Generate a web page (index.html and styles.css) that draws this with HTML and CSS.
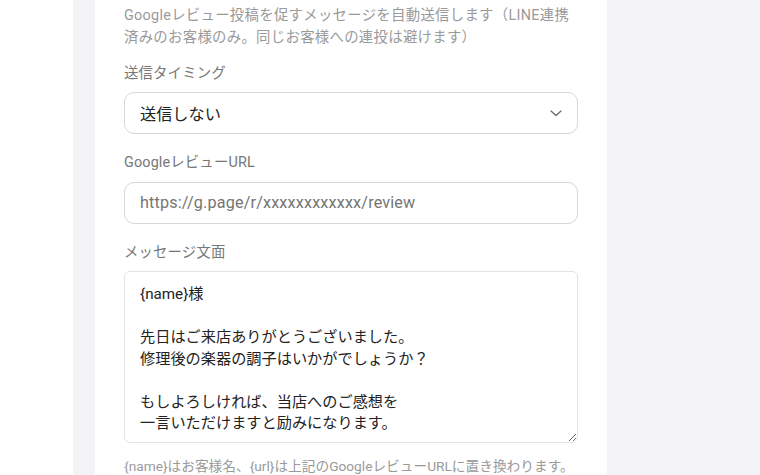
FILE: index.html
```html
<!DOCTYPE html>
<html lang="ja">
<head>
<meta charset="utf-8">
<title>Googleレビュー設定</title>
<link rel="stylesheet" href="styles.css">
</head>
<body>
<div class="sidebar"></div>
<main class="main">
  <section class="card">
    <p class="desc">Googleレビュー投稿を促すメッセージを自動送信します（LINE連携済みのお客様のみ。同じお客様への連投は避けます）</p>

    <div class="field">
      <label class="label" for="timing">送信タイミング</label>
      <div class="select" id="timing">
        <span class="select-value">送信しない</span>
        <svg class="chevron" width="12" height="7" viewBox="0 0 12 7"><path d="M1 1l5 4.6L11 1" fill="none" stroke="#6b6b6b" stroke-width="1.3" stroke-linecap="round" stroke-linejoin="round"/></svg>
      </div>
    </div>

    <div class="field">
      <label class="label" for="url">GoogleレビューURL</label>
      <input class="input" id="url" type="text" placeholder="https://g.page/r/xxxxxxxxxxxx/review">
    </div>

    <div class="field field-last">
      <label class="label label-msg" for="msg">メッセージ文面</label>
      <textarea class="textarea" id="msg">{name}様

先日はご来店ありがとうございました。
修理後の楽器の調子はいかがでしょうか？

もしよろしければ、当店へのご感想を
一言いただけますと励みになります。</textarea>
      <p class="help">{name}はお客様名、{url}は上記のGoogleレビューURLに置き換わります。</p>
    </div>
  </section>
</main>
</body>
</html>
```

FILE: styles.css
```css
* {
  box-sizing: border-box;
}

html, body {
  margin: 0;
  height: 475px;
  overflow: hidden;
}

body {
  display: flex;
  font-family: "Roboto", "Noto Sans CJK JP", sans-serif;
  background: #ffffff;
  color: #222222;
}

.sidebar {
  width: 73px;
  flex: none;
  background: #ffffff;
}

.main {
  flex: 1;
  background: #f4f4f6;
  padding-left: 22px;
}

.card {
  width: 512px;
  height: 100%;
  background: #ffffff;
  padding: 5px 29px 0;
}

.desc {
  margin: 0 0 14.4px;
  font-size: 14.4px;
  line-height: 21.6px;
  color: #9a9a9a;
  letter-spacing: 0.02em;
}

.field {
  display: flex;
  flex-direction: column;
  margin-bottom: 18px;
}

.label {
  font-size: 14.4px;
  line-height: 21.6px;
  color: #777777;
  margin-bottom: 8px;
  letter-spacing: 0.01em;
}

.label-msg {
  margin-bottom: 7.6px;
}

.select {
  height: 42px;
  border: 1px solid #d7d7d7;
  border-radius: 10px;
  padding: 0 15px 0 15px;
  display: flex;
  align-items: center;
  justify-content: space-between;
  background: #ffffff;
}

.select-value {
  font-size: 16.2px;
  color: #222222;
}

.chevron {
  display: block;
  margin-right: 0;
}

.input {
  height: 42px;
  border: 1px solid #d7d7d7;
  border-radius: 10px;
  padding: 0 15px;
  font-family: inherit;
  font-size: 16.2px;
  letter-spacing: 0.01em;
  color: #222222;
  background: #ffffff;
  outline: none;
}

.input::placeholder {
  color: #757575;
}

.textarea {
  height: 172px;
  border: 1px solid #e3e3e3;
  border-radius: 6px;
  padding: 12.5px 15px;
  font-family: inherit;
  font-size: 15.2px;
  line-height: 21.5px;
  color: #222222;
  resize: vertical;
  outline: none;
  overflow: hidden;
}

.help {
  margin: 13px 0 0;
  font-size: 13.7px;
  line-height: 20px;
  color: #9a9a9a;
  white-space: nowrap;
}
```
